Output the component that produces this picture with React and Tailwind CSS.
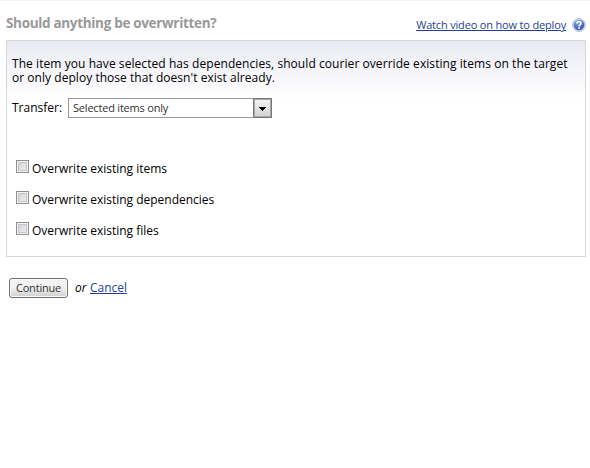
const OPTIONS = [
  { id: "items", label: "Overwrite existing items" },
  { id: "dependencies", label: "Overwrite existing dependencies" },
  { id: "files", label: "Overwrite existing files" },
];

function HelpIcon() {
  return (
    <svg width="14" height="14" viewBox="0 0 14 14" className="shrink-0">
      <defs>
        <radialGradient id="help-fill" cx="35%" cy="25%" r="80%">
          <stop offset="0" stopColor="#8fb0ee" />
          <stop offset="0.55" stopColor="#4a72cc" />
          <stop offset="1" stopColor="#3a60b8" />
        </radialGradient>
      </defs>
      <circle cx="7" cy="7" r="6.4" fill="#dfe5f0" stroke="#a9b4c9" strokeWidth="0.9" />
      <circle cx="7" cy="7" r="5.3" fill="url(#help-fill)" />
      <path d="M4.9 5.5C5 2.9 9.3 3 9.1 5.4C9 6.8 7.1 6.9 7.1 8.5" fill="none" stroke="#fff" strokeWidth="1.6" />
      <rect x="6.2" y="9.3" width="1.8" height="1.6" fill="#fff" />
    </svg>
  );
}

function TransferSelect() {
  return (
    <button
      type="button"
      className="flex h-5 w-[204px] items-center justify-between border border-[#999] bg-white pl-1 text-left text-[11px] leading-[18px] text-[#333]"
    >
      <span className="whitespace-nowrap tracking-[-0.2px]">Selected items only</span>
      <span className="-my-px -mr-px flex h-5 w-[19px] items-center justify-center border border-[#777] bg-linear-to-b from-[#f4f4f4] to-[#d2d2d2] shadow-[inset_0_0_0_1px_#a8a8a8]">
        <svg width="7" height="4" viewBox="0 0 7 4" className="mt-px" shapeRendering="crispEdges">
          <path d="M0 0H7V1H6V2H5V3H4V4H3V3H2V2H1V1H0Z" fill="#000" />
        </svg>
      </span>
    </button>
  );
}

function OverwriteOption({ option }) {
  return (
    <label className="flex h-[31px] items-start gap-[3px]">
      <input
        type="checkbox"
        name={option.id}
        className="h-[13px] w-[13px] appearance-none border border-[#8e8f8f] bg-linear-to-br from-[#c9ccd0] to-[#f5f5f5] shadow-[inset_0_0_0_1px_#f4f4f4,inset_0_0_0_2px_#c3c5c8]"
      />
      <span className="mt-px whitespace-nowrap leading-4">{option.label}</span>
    </label>
  );
}

export default function App() {
  return (
    <div className="h-[468px] w-[590px] overflow-hidden border-t border-[#f3f3f5] bg-white font-['Trebuchet_MS','Open_Sans',sans-serif] text-[12px] text-black">
      <header className="flex h-[39px] items-start justify-between pl-1.5 pr-1">
        <h1 className="mt-3 whitespace-nowrap text-[13.5px] font-bold leading-5 tracking-[-0.32px] text-[#999]">
          Should anything be overwritten?
        </h1>
        <div className="mt-[17px] flex items-center gap-1.5">
          <a href="#" className="whitespace-nowrap text-[11px] leading-[14px] tracking-[-0.17px] text-[#1f3f98] underline">
            Watch video on how to deploy
          </a>
          <HelpIcon />
        </div>
      </header>

      <main className="ml-1.5 mr-1 h-[217px] border border-[#d6d7db] bg-linear-to-b from-[#eaeaf4] to-white to-[58px] pl-[5px] pt-4">
        <p className="whitespace-nowrap leading-[14px]">
          <span className="block tracking-[0.066px]">
            The item you have selected has dependencies, should courier override existing items on the target
          </span>
          <span className="block tracking-[0.04px]">or only deploy those that doesn't exist already.</span>
        </p>
        <div className="mt-[13px] flex items-center">
          <span className="w-14 whitespace-nowrap leading-5">Transfer:</span>
          <TransferSelect />
        </div>
        <div className="mt-[42px] pl-1 tracking-[-0.01px]">
          {OPTIONS.map((option) => (
            <OverwriteOption key={option.id} option={option} />
          ))}
        </div>
      </main>

      <footer className="mt-[21px] flex h-5 items-center pl-[9px]">
        <button
          type="button"
          className="h-5 w-[59px] rounded-[3px] border border-[#707070] bg-linear-to-b from-[#f2f2f2] from-45% to-[#d0d0d0] text-[11px] leading-[16px] tracking-[-0.2px] text-[#333] shadow-[inset_0_0_0_1px_#fafafa]"
        >
          Continue
        </button>
        <em className="ml-[7px] w-[15px] leading-5">or</em>
        <a href="#" className="leading-5 text-[#1f3f98] underline">
          Cancel
        </a>
      </footer>
    </div>
  );
}
